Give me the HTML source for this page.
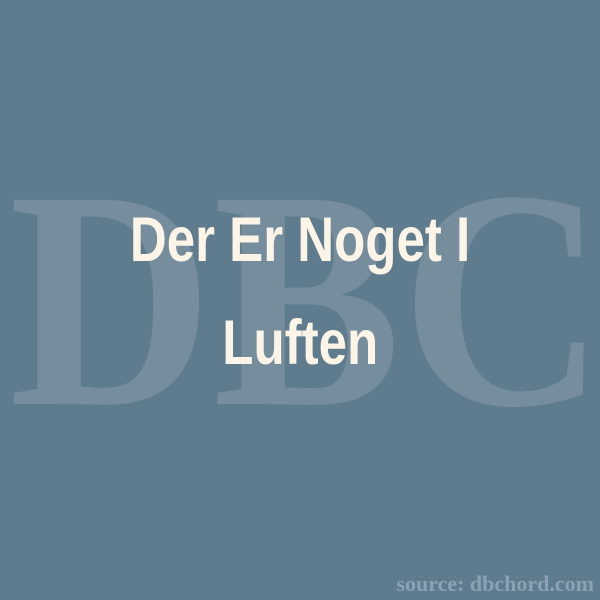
<!DOCTYPE html>
<html><head><style>
html,body{margin:0;padding:0}
body{width:600px;height:600px;background:#5f7c8e;position:relative;overflow:hidden}
.bg{position:absolute;left:0;top:0;width:600px;text-align:center;font-family:"Liberation Serif",serif;font-weight:bold;font-size:312px;line-height:1;color:#758d9c;}
.bg span{display:inline-block;transform:scaleX(0.905);transform-origin:center;position:absolute;left:-93px;width:800px;top:144px;}
.t{position:absolute;left:0;width:600px;text-align:center;font-family:"Liberation Sans",sans-serif;font-weight:bold;color:#fcf4e6;font-size:63px;line-height:63px}
.t span{display:inline-block;transform:scaleX(0.81)}
.src{position:absolute;right:6px;top:571px;font-family:"Liberation Serif",serif;font-weight:bold;font-size:22px;color:#8aa2b2}
</style></head><body>
<div class="bg"><span>DBC</span></div>
<div class="t" style="top:209px"><span>Der Er Noget I</span></div>
<div class="t" style="top:312px"><span>Luften</span></div>
<div class="src">source: dbchord.com</div>
</body></html>
